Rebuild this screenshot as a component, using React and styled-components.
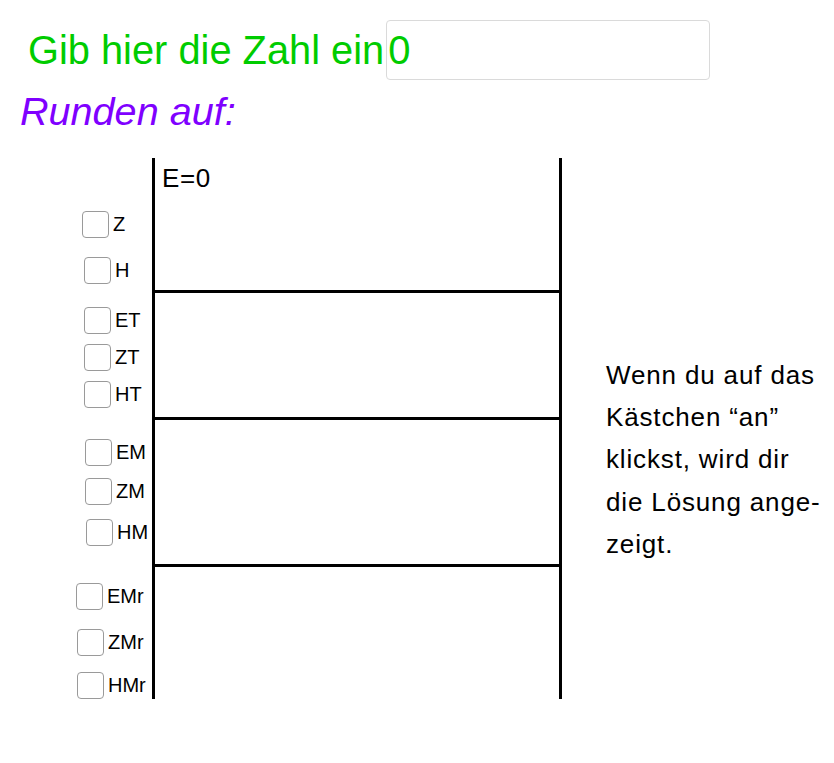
import React from "react";
import styled, { createGlobalStyle } from "styled-components";

const Global = createGlobalStyle`
  html, body { margin: 0; padding: 0; background: #fff; }
  body { font-family: "Liberation Sans", Arial, sans-serif; color: #000; }
`;

const Page = styled.div`
  width: 834px;
  height: 763px;
  overflow: hidden;
  display: flex;
  flex-direction: column;
`;

const InputRow = styled.div`
  display: flex;
  align-items: center;
  margin-top: 20px;
  padding-left: 28px;
  height: 60px;
`;

const Prompt = styled.span`
  font-size: 39.8px;
  color: #00cc00;
  white-space: nowrap;
`;

const NumberField = styled.input`
  box-sizing: border-box;
  width: 324px;
  height: 60px;
  margin-left: 2px;
  padding: 0 0 0 1px;
  border: 1px solid #dadada;
  border-radius: 4px;
  font-family: "Liberation Sans", Arial, sans-serif;
  font-size: 40px;
  color: #00cc00;
  background: #fff;
  outline: none;
`;

const Heading = styled.div`
  margin: 8px 0 0 20px;
  font-size: 39.6px;
  font-style: italic;
  color: #7f00ff;
  line-height: 46px;
`;

const Stage = styled.div`
  display: flex;
  margin-top: 24px;
`;

const OptionColumn = styled.div`
  width: 152px;
  display: flex;
  flex-direction: column;
  padding-top: 53px;
`;

const Option = styled.label`
  display: flex;
  align-items: center;
  height: 27px;
  margin-left: ${(p) => p.$indent}px;
  margin-top: ${(p) => p.$gap}px;
  font-size: 20px;
  line-height: 27px;
`;

const Box = styled.span`
  box-sizing: border-box;
  width: 27px;
  height: 27px;
  border: 1px solid #9a9a9a;
  border-radius: 4px;
  background: #fff;
  margin-right: 4px;
  flex: none;
`;

const Chart = styled.div`
  box-sizing: border-box;
  width: 410px;
  border-left: 3px solid #000;
  border-right: 3px solid #000;
  display: flex;
  flex-direction: column;
`;

const Band = styled.div`
  height: ${(p) => p.$h}px;
  border-bottom: ${(p) => (p.$last ? "none" : "3px solid #000")};
  margin-right: -3px;
`;

const Value = styled.div`
  font-size: 26px;
  letter-spacing: 0.6px;
  line-height: 30px;
  margin: 5px 0 0 7px;
`;

const Note = styled.p`
  margin: 196px 0 0 44px;
  font-size: 26px;
  letter-spacing: 0.85px;
  line-height: 42.2px;
  white-space: nowrap;
`;

const options = [
  { label: "Z", indent: 82, gap: 0 },
  { label: "H", indent: 84, gap: 19 },
  { label: "ET", indent: 84, gap: 23 },
  { label: "ZT", indent: 84, gap: 10 },
  { label: "HT", indent: 84, gap: 10 },
  { label: "EM", indent: 85, gap: 31 },
  { label: "ZM", indent: 85, gap: 12 },
  { label: "HM", indent: 86, gap: 14 },
  { label: "EMr", indent: 76, gap: 37 },
  { label: "ZMr", indent: 77, gap: 19 },
  { label: "HMr", indent: 77, gap: 16 },
];

export default function App() {
  return (
    <Page>
      <Global />
      <InputRow>
        <Prompt>Gib hier die Zahl ein</Prompt>
        <NumberField defaultValue="0" />
      </InputRow>
      <Heading>Runden auf:</Heading>
      <Stage>
        <OptionColumn>
          {options.map((o) => (
            <Option key={o.label} $indent={o.indent} $gap={o.gap}>
              <Box />
              {o.label}
            </Option>
          ))}
        </OptionColumn>
        <Chart>
          <Band $h={132}>
            <Value>E=0</Value>
          </Band>
          <Band $h={124} />
          <Band $h={144} />
          <Band $h={132} $last />
        </Chart>
        <Note>
          Wenn du auf das
          <br />
          Kästchen “an”
          <br />
          klickst, wird dir
          <br />
          die Lösung ange-
          <br />
          zeigt.
        </Note>
      </Stage>
    </Page>
  );
}
